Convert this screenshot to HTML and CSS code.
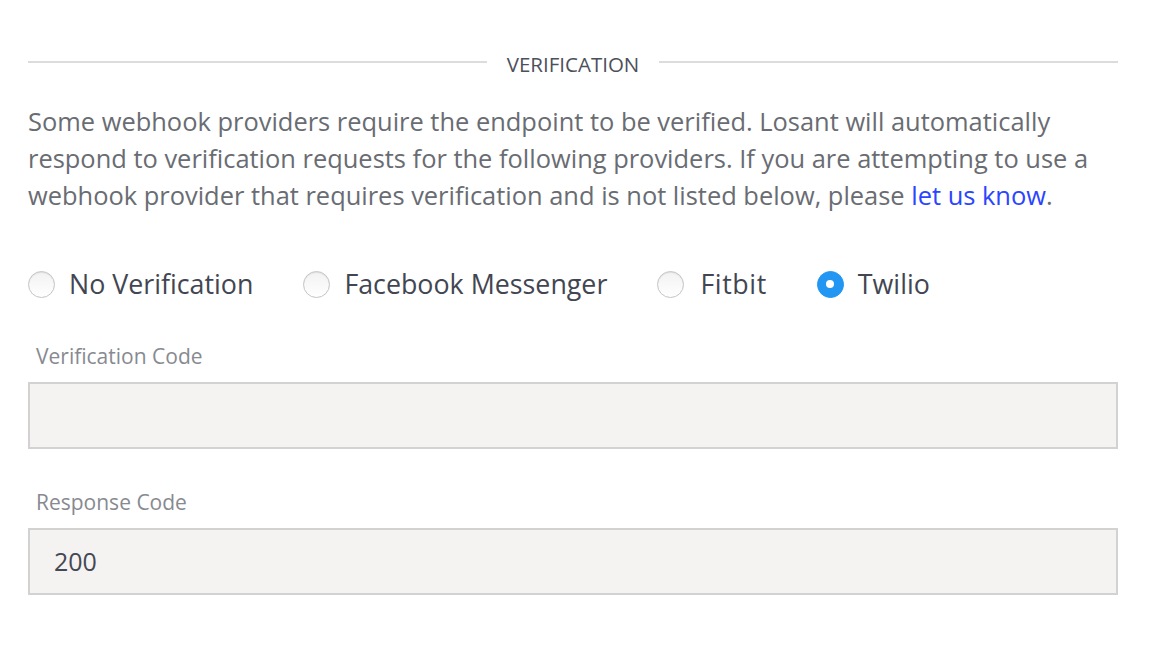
FILE: index.html
```html
<!DOCTYPE html>
<html>
<head>
<meta charset="utf-8">
<link rel="stylesheet" href="styles.css">
</head>
<body>
<div class="page">
  <div class="divider">
    <span class="rule"></span>
    <span class="divider-title">VERIFICATION</span>
    <span class="rule"></span>
  </div>
  <p class="desc">Some webhook providers require the endpoint to be verified. Losant will automatically respond to verification requests for the following providers. If you are attempting to use a webhook provider that requires verification and is not listed below, please <a class="link" href="#">let us know</a>.</p>
  <div class="radios">
    <label class="radio"><span class="dot"></span><span class="rlabel">No Verification</span></label>
    <label class="radio"><span class="dot"></span><span class="rlabel">Facebook Messenger</span></label>
    <label class="radio"><span class="dot"></span><span class="rlabel">Fitbit</span></label>
    <label class="radio"><span class="dot checked"></span><span class="rlabel">Twilio</span></label>
  </div>
  <div class="field f1">
    <div class="flabel">Verification Code</div>
    <div class="input"></div>
  </div>
  <div class="field f2">
    <div class="flabel">Response Code</div>
    <div class="input">200</div>
  </div>
</div>
</body>
</html>
```
FILE: styles.css
```css
html, body { margin: 0; padding: 0; background: #fff; }
body { font-family: "Open Sans", "Noto Sans", sans-serif; }
.page { padding: 0 38px 0 28px; width: 1090px; }
.divider { display: flex; align-items: center; height: 20px; margin-top: 52px; gap: 20px; }
.rule { flex: 1; height: 2px; background: #dcdcdc; }
.divider-title { font-size: 20.5px; color: #4c505b; line-height: 20px; position: relative; top: 2px; }
.desc { margin: 31px 0 0; font-size: 25.45px; line-height: 37px; color: #696c72; }
.link { color: #2b44ff; text-decoration: none; }
.radios { display: flex; align-items: center; gap: 50px; margin-top: 55px; height: 30px; }
.radio { display: flex; align-items: center; gap: 14px; }
.radio:nth-child(3) { gap: 16px; }
.radio:nth-child(3) .rlabel { letter-spacing: 0.6px; }
.dot { width: 25px; height: 25px; border-radius: 50%; border: 1px solid #c4c4c4; background: linear-gradient(#f2f2f2, #fff); box-shadow: inset 0 1px 1px rgba(0,0,0,0.08); position: relative; }
.dot.checked { background: #2196f3; border-color: #2196f3; box-shadow: none; }
.dot.checked::after { content: ""; position: absolute; left: 50%; top: 50%; width: 8px; height: 8px; margin: -4px 0 0 -4px; border-radius: 50%; background: #fff; }
.rlabel { font-size: 26.8px; color: #424652; line-height: 30px; }
.f1 { margin-top: 44px; }
.f2 { margin-top: 40px; }
.flabel { font-size: 21px; color: #878a90; padding-left: 8px; line-height: 26px; }
.input { margin-top: 13px; height: 63px; border: 2px solid #d2d2d2; background: #f4f3f2; font-size: 25px; color: #444853; line-height: 63px; padding-left: 24px; }
```
